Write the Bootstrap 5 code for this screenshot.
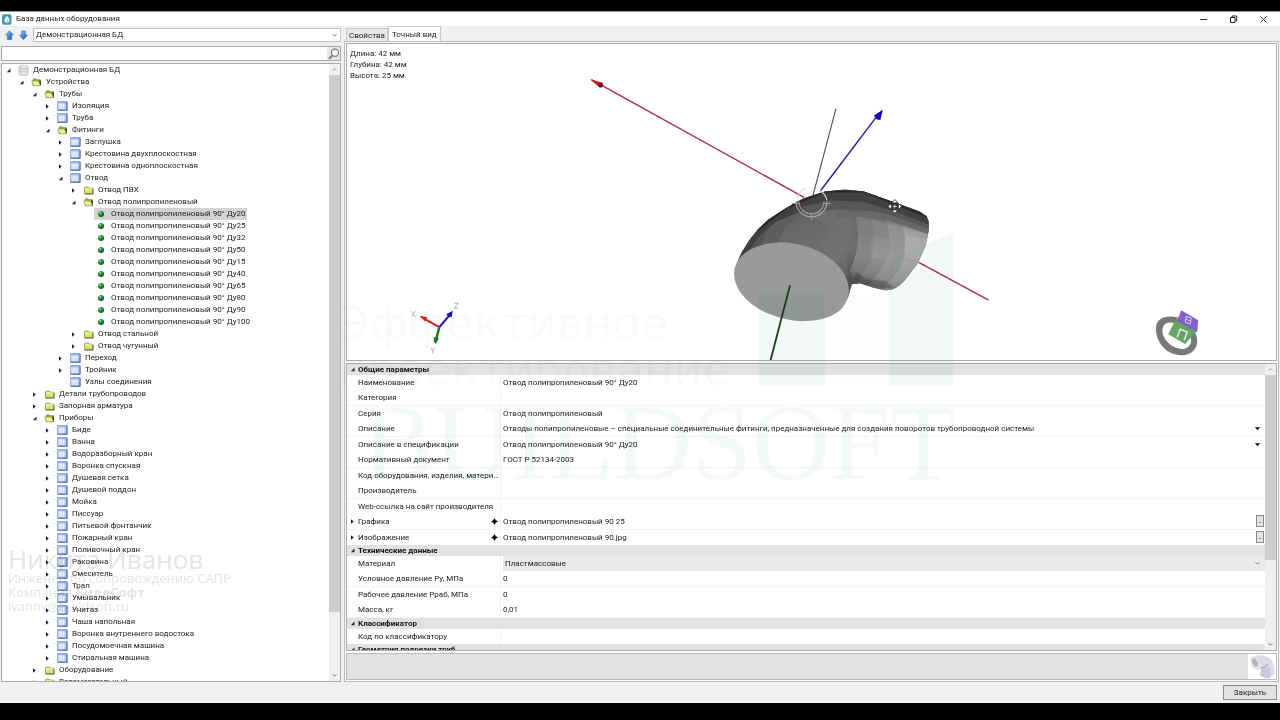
<!DOCTYPE html>
<html lang="ru">
<head>
<meta charset="utf-8">
<meta name="viewport" content="width=device-width, initial-scale=1">
<title>База данных оборудования</title>
<link rel="stylesheet" href="https://cdn.jsdelivr.net/npm/bootstrap@5.3.0/dist/css/bootstrap.min.css">
<style>
  body { background: #000; font: 8px/12px Roboto, "Open Sans", sans-serif; color: #222; padding: 11px 0 17px; }
  button, select, input { font: inherit; color: inherit; }
  .plain { border: 0; padding: 0; background: none; line-height: 0; }
  .app-window { background: #f0f0f0; }
  .title-bar { height: 15px; background: #fff; border-top: 1px solid #999; padding: 0 2px; }
  .title-bar button { width: 30px; }
  .side { width: 341px; padding: 2px 0 0 1px; }
  .top-row { gap: 5px; padding-left: 4px; }
  .combo { height: 14px; border: 1px solid #c4c4c4; border-radius: 0; background: #fff; padding: 0 2px; appearance: none; }
  .combo-wrap svg, .value-select svg { position: absolute; right: 3px; top: 5px; pointer-events: none; }
  .search-row { height: 15px; border: 1px solid #aaa; background: #fff; margin: 4px 0 2px; }
  .search-row input { border: 0; outline: 0; min-width: 0; height: 12px; }
  .search-row button { width: 13px; background: #e6e6e6; }
  .panel { background: #fff; border: 1px solid #aaa; }
  .tree ul { list-style: none; margin: 0; padding: 0 0 0 13px; }
  .tree > ul { padding-left: 1px; }
  .node { height: 12px; white-space: nowrap; }
  .node .toggle { width: 13px; height: 12px; padding-right: 2px; }
  .node .item { height: 12px; padding-right: 2px; }
  .node .pic { width: 17px; padding-left: 2px; line-height: 0; }
  .selected { background: #d3d3d3; }
  .scroll-track { width: 11px; background: #f0f0f0; }
  .scroll-track button { height: 11px; }
  .thumb { background: #cdcdcd; }
  .main-col { padding: 0 1px 0 3px; }
  .tabs { height: 15px; padding-left: 2px; }
  .tabs button { border: 1px solid #c8c8c8; border-bottom: 0; border-radius: 0; padding: 0 2px; background: #e9e9e9; height: 13px; line-height: 13px; color: #222; }
  .tabs button.active { background: #fff; height: 15px; padding: 0 3px; }
  .frame { border: 1px solid #bbb; padding: 1px; background: #fafafa; gap: 2px; }
  .view3d { flex: 319 1 0; }
  .view3d svg { width: 100%; height: 100%; }
  .dims { left: 3px; top: 4px; line-height: 11px; }
  .props { flex: 289 1 0; }
  .props table { width: 100%; table-layout: fixed; border-collapse: separate; border-spacing: 0; }
  .props th, .props td { padding: 0; font-weight: 400; height: 15px; line-height: 15px; white-space: nowrap; overflow: hidden; text-overflow: ellipsis; }
  .props .prop:nth-child(odd) > * { border-bottom: 1px solid #f4f4f4; height: 16px; }
  .props .group th { font-weight: 700; background: #e2e2e2; height: 11px; line-height: 11px; color: #111; }
  .props td { border-left: 1px solid #f2f2f2; padding-left: 2px; }
  .props .c-mark { width: 11px; text-align: center; line-height: 0; }
  .props .c-name { width: 130px; }
  .props .c-flag { width: 12px; }
  .drop { width: 15px; }
  .more { width: 8px; height: 12px; border: 1px solid #888; background: #e4e4e4; padding: 0; font-size: 7px; line-height: 10px; margin-right: 1px; }
  .value-select select { width: 100%; height: 15px; line-height: 15px; border: 0; background: #e9e9e9; padding: 0 2px; appearance: none; display: block; }
  .value-select svg { top: 5px; right: 4px; }
  .preview { height: 27px; border: 1px solid #bbb; background: #e2e2e2; }
  .preview svg { background: #fff; }
  .foot { height: 21px; padding: 0 3px 0 0; }
  .close-btn { width: 54px; height: 15px; border: 1px solid #8c8c8c; border-radius: 0; background: #e1e1e1; padding: 0; line-height: 13px; }
  .ghost { position: absolute; pointer-events: none; mix-blend-mode: multiply; white-space: nowrap; }
  .ghost-author { left: 8px; bottom: 90px; color: #e1e5e9; font: 13px/14px "Open Sans", sans-serif; }
  .ghost-author .who { font-size: 26px; line-height: 24px; }
  .ghost-slogan { left: 338px; top: 290px; font: 45px/46px "DejaVu Sans", sans-serif; color: #f8fafb; }
  .ghost-brand { left: 362px; top: 370px; font: 108px/124px "Liberation Serif", serif; color: #f5f9fa; }
  .ghost-logo { left: 758px; top: 222px; }
</style>
</head>
<body class="vh-100 d-flex flex-column overflow-hidden">
<svg class="position-absolute" width="0" height="0" aria-hidden="true">
  <defs>
    <linearGradient id="gGrid" x1="0" y1="0" x2="1" y2="1"><stop offset="0" stop-color="#e4f0ff"/><stop offset="1" stop-color="#93ade6"/></linearGradient>
    <linearGradient id="gArrow" x1="0" y1="0" x2="1" y2="1"><stop offset="0" stop-color="#7fd0fa"/><stop offset="1" stop-color="#164a9c"/></linearGradient>
    <radialGradient id="gBall" cx=".35" cy=".3" r=".7"><stop offset="0" stop-color="#a8eaa8"/><stop offset=".4" stop-color="#239a35"/><stop offset="1" stop-color="#075514"/></radialGradient>
  </defs>
  <symbol id="i-open" viewBox="0 0 5 5"><path d="M4.500.5v3.700H.8z" fill="#252550"/></symbol>
  <symbol id="i-shut" viewBox="0 0 5 5"><path d="M1 .3l2.700 2.200L1 4.700z" fill="#14143c"/></symbol>
  <symbol id="i-db" viewBox="0 0 11 11"><path d="M1 2v7c0 1 2 1.600 4.500 1.600S10 10 10 9V2z" fill="#dfe2e6" stroke="#a9aeb5" stroke-width=".7"/><ellipse cx="5.500" cy="2" rx="4.500" ry="1.500" fill="#f3f4f6" stroke="#a9aeb5" stroke-width=".7"/><path d="M1 5.500c2 1.300 7 1.300 9 0M3 4v6" fill="none" stroke="#c0c5cb" stroke-width=".6"/></symbol>
  <symbol id="i-folder" viewBox="0 0 11 11"><path d="M1.500 8.500V3l.8-1h2.900l.8 1.200h3.700v5.300z" fill="#dcdf72" stroke="#8b913c" stroke-width=".8"/><path d="M2 4h7" stroke="#f8fac0"/><path d="M1.500 9.100h8.600V4" fill="none" stroke="#4b5022" stroke-width=".8"/></symbol>
  <symbol id="i-folder-open" viewBox="0 0 11 11"><path d="M2 8.500V2.700l.7-.9h2.500l.8 1h3.500v5.700z" fill="#a8a950" stroke="#72742e" stroke-width=".7"/><path d="M.6 4h6.800l2 4.800H2.600z" fill="#edf0a6" stroke="#8b913c" stroke-width=".6"/><path d="M8 4l1.800 4.800V3.500z" fill="#33351c"/></symbol>
  <symbol id="i-grid" viewBox="0 0 11 11"><rect x=".6" y=".6" width="9.400" height="8.600" fill="url(#gGrid)" stroke="#7f98cc" stroke-width=".8"/><path d="M1 1.700h9" stroke="#8faae6"/><path d="M2 4.700h6.500M2 7h6.500M4 2.500V8M6.500 2.500V8" stroke="#fff" stroke-width=".7"/><path d="M.6 9.300H10.100V1" fill="none" stroke="#3f5590" stroke-width=".8"/></symbol>
  <symbol id="i-ball" viewBox="0 0 11 11"><circle cx="5" cy="5" r="3" fill="url(#gBall)"/></symbol>
  <symbol id="i-down" viewBox="0 0 7 5"><path d="M1.500 1.200l2 2 2-2" fill="none" stroke="#777" stroke-width="1"/></symbol>
  <symbol id="i-up" viewBox="0 0 7 5"><path d="M1.500 3.500l2-2 2 2" fill="none" stroke="#999" stroke-width="1"/></symbol>
  <symbol id="i-pick" viewBox="0 0 7 5"><path d="M.8 1l1.500.3h2.400L6.200 1 3.500 4.200z" fill="#111"/></symbol>
  <symbol id="i-diamond" viewBox="0 0 8 8"><path d="M4 .5L5.300 2.700 7.500 4 5.300 5.300 4 7.500 2.700 5.300.5 4l2.200-1.300z" fill="#111" stroke="#111" stroke-width=".5"/></symbol>
</svg>

<div class="app-window flex-fill d-flex flex-column position-relative" style="min-height:0">
  <header class="title-bar d-flex align-items-center flex-shrink-0">
    <svg width="10" height="11" viewBox="0 0 10 11" aria-hidden="true"><rect width="9.500" height="10.500" y=".3" rx="2" fill="#3c9aaa"/><path d="M5 1.800c1.600 2 2.700 3.300 2.700 4.900a2.800 2.800 0 0 1-5.400 0C2.300 5 3.600 4 5 1.800z" fill="#fff"/><path d="M5 5c1 1 1.200 1.600 1 2.800L4 8z" fill="#8dcbd3"/></svg>
    <span class="ms-1">База данных оборудования</span>
    <div class="ms-auto d-flex">
      <button class="plain" aria-label="Свернуть"><svg width="9" height="9"><path d="M1 4.500h7" stroke="#333"/></svg></button>
      <button class="plain" aria-label="Восстановить"><svg width="9" height="9" fill="none" stroke="#222"><path d="M1.500 2.500h4.500v5H1.500zM3 2V1h4.700v5H6.500"/></svg></button>
      <button class="plain" aria-label="Закрыть окно"><svg width="9" height="9"><path d="M1.500 1.500l6 6m0-6l-6 6" stroke="#333"/></svg></button>
    </div>
  </header>

  <div class="d-flex flex-fill" style="min-height:0">
    <aside class="side d-flex flex-column flex-shrink-0">
      <div class="top-row d-flex align-items-center flex-shrink-0">
        <button class="plain" aria-label="Вверх"><svg width="9" height="11"><path d="M4.500.8l4 4.200H6.700v4.500H2.300V5H.5z" fill="url(#gArrow)" stroke="#2e6cb4" stroke-width=".5"/></svg></button>
        <button class="plain" aria-label="Вниз"><svg width="9" height="11"><path d="M2.500 1h4v4h2l-4 4.800L.5 5.500l2-.5z" fill="url(#gArrow)" stroke="#2e6cb4" stroke-width=".5"/></svg></button>
        <div class="combo-wrap position-relative flex-fill">
          <select class="combo w-100 d-block" aria-label="База данных"><option>Демонстрационная БД</option></select>
          <svg width="7" height="5"><use href="#i-down"/></svg>
        </div>
      </div>
      <div class="search-row d-flex flex-shrink-0">
        <input type="text" class="flex-fill" aria-label="Поиск">
        <button class="plain" aria-label="Найти"><svg width="12" height="12" fill="none" stroke="#777"><circle cx="7" cy="4.700" r="3.600" fill="#f4f4f4" stroke-width="1.100"/><path d="M4.400 7.300L1 10.800" stroke-width="1.700"/></svg></button>
      </div>
      <div class="panel d-flex flex-fill overflow-hidden">
        <nav class="tree flex-fill overflow-hidden" id="tree" aria-label="Оборудование"></nav>
        <div class="scroll-track d-flex flex-column">
          <button class="plain" aria-label="Прокрутить вверх"><svg width="7" height="5"><use href="#i-up"/></svg></button>
          <div class="thumb" style="flex:537 1 0"></div><div style="flex:58 1 0"></div>
          <button class="plain" aria-label="Прокрутить вниз"><svg width="7" height="5"><use href="#i-down"/></svg></button>
        </div>
      </div>
    </aside>

    <main class="main-col flex-fill d-flex flex-column" style="min-width:0">
      <div class="tabs d-flex align-items-end flex-shrink-0" role="tablist">
        <button role="tab" aria-selected="false">Свойства</button>
        <button role="tab" aria-selected="true" class="active">Точный вид</button>
      </div>
      <div class="frame d-flex flex-column flex-fill overflow-hidden">
        <section class="view3d panel position-relative overflow-hidden" aria-label="Точный вид">
          <svg class="d-block" viewBox="346 43 931 317" preserveAspectRatio="xMidYMid slice" role="img" aria-label="Отвод">
            <defs>
              <linearGradient id="gBody" gradientUnits="userSpaceOnUse" x1="800" y1="190" x2="835" y2="285"><stop offset="0" stop-color="#4a4a4a"/><stop offset=".3" stop-color="#676767"/><stop offset=".7" stop-color="#707070"/><stop offset="1" stop-color="#505050"/></linearGradient>
              <linearGradient id="gFan" gradientUnits="userSpaceOnUse" x1="890" y1="205" x2="868" y2="292"><stop offset="0" stop-color="#565656"/><stop offset=".2" stop-color="#6c6c6c"/><stop offset=".21" stop-color="#7a7a7a"/><stop offset=".6" stop-color="#888"/><stop offset=".8" stop-color="#777"/><stop offset=".9" stop-color="#555"/><stop offset="1" stop-color="#777"/></linearGradient>
              <clipPath id="bodyClip"><path id="bodyShape" d="M737 262L741 253 749 240 757 230 768 219 787 207 803 198 825 191 845 189 864 191 895 202 920 211 927 216Q930 221 929 230L926 245 918 263 905 280Q895 291 885 290L872 287 860 283 852 284 848 298 810 300z"/></clipPath>
            </defs>
            <path d="M591 79L804 197M919 262L989 300" stroke="#a8304a" stroke-width="1.400"/>
            <path d="M589.500 78.500l13 3.500-3 5z" fill="#cf1820"/><circle cx="600.500" cy="84.500" r="2.200" fill="#5c0910"/>
            <path d="M836 108L813 195" stroke="#405148" stroke-width="1.100"/>
            <path d="M820 191L876 117" stroke="#26268c" stroke-width="1.500"/><path d="M883 109l-2.500 10.500-3.500-.5-3-4z" fill="#1008b8"/>
            <use href="#bodyShape" fill="url(#gBody)"/>
            <g clip-path="url(#bodyClip)">
              <path d="M740 262l17-32 11-8 15-1-11 14-8 20z" fill="#555"/>
              <path d="M768 222l19-12 11 3-13 15-8 15-16 2 6-14z" fill="#5e5e5e"/>
              <path d="M852 207Q866 235 850 270L856 292 880 300 945 280 940 210 890 195z" fill="url(#gFan)"/>
              <path d="M866 207Q881 232 870 262L854 288 880 300 945 280 940 210z" fill="#fff" opacity=".07"/>
              <path d="M882 210Q897 240 884 266L866 288 880 300 945 280 940 210z" fill="#fff" opacity=".1"/>
              <path d="M899 216Q911 240 899 270L880 292 920 300 945 280 940 215z" fill="#fff" opacity=".12"/>
              <path d="M906 234l24 6-7 20-18-3z" fill="#fff" opacity=".12"/>
              <path d="M871 236l20 3-4 20-17-2z" fill="#fff" opacity=".06"/>
              <path d="M850 288l7-16 9 7 20 2 8 6-14 2-20-6z" fill="#333" opacity=".3"/>
              <path d="M806 210l38-4 10 17-7 24 1 30-22-20-4-14 7-17z" fill="#777" opacity=".4"/>
              <path d="M734 262l23-34 30-24 38-16 39 0 66 24v14l-34-12-34-8-34-1-28 6-25 11-18 16-10 16z" fill="#404040"/>
              <path d="M803 206l26-6 33 1 31 9 36 14v7l-32-11-31-8-30-3-32 4z" fill="#575757"/>
              <path d="M834 210l32 0 24 4 39 15v5l-38-13-27-5-28 2z" fill="#686868"/>
              <path d="M757 230l30-23 38-16 39 0 63 25" fill="none" stroke="#282828" stroke-width="2"/>
            </g>
            <path d="M734 272C735 253 757 242 783 242c35 2 65 22 66 48-1 22-21 31-48 31-35-2-68-23-67-49z" fill="#999b9a"/>
            <path d="M790 285L770.500 360" stroke="#16421c" stroke-width="1.800"/>
            <g fill="none" stroke="#aaa" stroke-width="1.100"><path d="M796 201a15.500 15.500 0 0 0 31 0"/><path d="M799 201a12.500 12.500 0 0 0 25 0M811.500 213v7M792 203h8M823 203h8" stroke="#999"/><path d="M797 198q2-7 8-10M820 190q6 4 7 10" stroke="#ddd"/></g>
            <g stroke="#222" stroke-width=".8" fill="#fff"><path d="M895 199l3 3.500h-6zM895 213l3-3.500h-6zM888 206l3.500-3v6zM902 206l-3.500-3v6z"/><path d="M893 206h4M895 204v4" stroke="#ddd"/></g>
            <path d="M438.500 327L424 319" stroke="#d91c1c" stroke-width="2"/><path d="M418.500 315.500l8 1.500-2.500 4z" fill="#d91c1c"/>
            <path d="M438.500 327L448 316" stroke="#1414b4" stroke-width="2"/><path d="M452 310.500l-1 6-3 .5-2.500-3z" fill="#1414b4"/>
            <path d="M438.500 327L435.500 339" stroke="#147828" stroke-width="2.400"/><path d="M433 337l5 1-3 6-2-3z" fill="#147828"/>
            <g fill="none" stroke="#999" stroke-width=".8"><path d="M410.500 311l4 6m0-6l-4 6M453.500 303h4.500l-4.500 5h4M430 347.500l2 3m2-3l-2 3v3"/></g>
            <path fill-rule="evenodd" fill="#787878" d="M1157 325c2-8 12-11 24-7 12 5 18 16 17 25-2 11-14 15-26 10-11-5-17-18-15-28zm7 1c-3 7 2 16 11 21 9 4 16 1 17-6 0-8-6-14-14-17-7-3-12-2-14 2z"/>
            <path d="M1172 330l5-11 3-4-5 11z" fill="#d67776"/>
            <path d="M1182 310l17 10-1 12-20-11z" fill="#805fce"/>
            <path d="M1176 320l21 11-11 13-17-10z" fill="#62a564"/>
            <path d="M1178 337l3-8 7 3-3 8" fill="none" stroke="#e8f4e8" stroke-width="1.500"/>
            <path d="M1187 316l5 2-1 6-5-2zM1187 319l4 2" fill="none" stroke="#ddd5f4" stroke-width="1"/>
          </svg>
          <div class="dims position-absolute">Длина: 42 мм<br>Глубина: 42 мм<br>Высота: 25 мм</div>
        </section>

        <section class="props panel d-flex overflow-hidden" aria-label="Параметры">
          <div class="flex-fill overflow-hidden"><table id="props"><colgroup><col class="c-mark"><col class="c-name"><col class="c-flag"><col><col class="drop"></colgroup></table></div>
          <div class="scroll-track d-flex flex-column flex-shrink-0">
            <button class="plain" aria-label="Параметры вверх"><svg width="7" height="5"><use href="#i-up"/></svg></button>
            <div class="thumb" style="flex:185 1 0"></div><div style="flex:79 1 0"></div>
            <button class="plain" aria-label="Параметры вниз"><svg width="7" height="5"><use href="#i-down"/></svg></button>
          </div>
        </section>

        <div class="preview d-flex justify-content-end flex-shrink-0">
          <svg width="28" height="25" viewBox="0 0 28 25" role="img" aria-label="Изображение отвода"><path d="M4 3C10 0 20 1 24 7c2 4 3 9 2 13-3 5-11 4-14 1l1-6c-5 2-9-1-10-5-1-3-1-6 1-7z" fill="#dcdbe9"/><path d="M12 21l2-7 5-4 4 5-1 9c-4 1-8-1-10-3z" fill="#cac9dc"/><ellipse cx="7" cy="8.500" rx="3.500" ry="5.500" transform="rotate(-25 7 8.500)" fill="#b7b4c2" stroke="#ebebf4" stroke-width="1.500"/><path d="M13 14q4-1 7-4" stroke="#a9a7bd" fill="none"/></svg>
        </div>
      </div>
    </main>
  </div>

  <footer class="foot d-flex align-items-center justify-content-end flex-shrink-0"><button class="close-btn">Закрыть</button></footer>

  <div class="ghost ghost-logo"><svg width="198" height="153"><path d="M0 60h67v93H0zM131 26L196 0v153h-65z" fill="#f4f8f9"/><path d="M67 60h64v93H67z" fill="#fcfdfd"/></svg></div>
  <div class="ghost ghost-slogan">Эффективное<br>проектирование</div>
  <div class="ghost ghost-brand">BUILDSOFT</div>
  <div class="ghost ghost-author"><div class="who">Никита Иванов</div>Инженер по сопровождению САПР<br>Компания <b>БилдСофт</b><br>ivannv@buildsoft.ru</div>
</div>

<script>
  // Node: [label, icon, children | true (collapsed) | nothing (leaf)]
  const grid = n => [n, 'grid', true], shut = n => [n, 'folder', true];
  const sizes = [20, 25, 32, 50, 15, 40, 65, 80, 90, 100];
  const nodes = [['Демонстрационная БД', 'db', [['Устройства', 'folder-open', [
    ['Трубы', 'folder-open', [
      grid('Изоляция'), grid('Труба'),
      ['Фитинги', 'folder-open', [
        ...['Заглушка', 'Крестовина двухплоскостная', 'Крестовина одноплоскостная'].map(grid),
        ['Отвод', 'grid', [
          shut('Отвод ПВХ'),
          ['Отвод полипропиленовый', 'folder-open', sizes.map(s => ['Отвод полипропиленовый 90° Ду' + s, 'ball'])],
          shut('Отвод стальной'), shut('Отвод чугунный')]],
        grid('Переход'), grid('Тройник'), ['Узлы соединения', 'grid']]]]],
    shut('Детали трубопроводов'), shut('Запорная арматура'),
    ['Приборы', 'folder-open', ['Биде', 'Ванна', 'Водоразборный кран', 'Воронка спускная', 'Душевая сетка', 'Душевой поддон', 'Мойка', 'Писсуар', 'Питьевой фонтанчик', 'Пожарный кран', 'Поливочный кран', 'Раковина', 'Смеситель', 'Трап', 'Умывальник', 'Унитаз', 'Чаша напольная', 'Воронка внутреннего водостока', 'Посудомоечная машина', 'Стиральная машина'].map(grid)],
    shut('Оборудование'), shut('Вспомогательный')]]]]];
  const icon = (id, s) => `<svg width="${s}" height="${s}" aria-hidden="true"><use href="#i-${id}"/></svg>`;
  const branch = list => '<ul>' + list.map(([name, pic, kids]) => `<li><div class="node d-flex">` +
    (kids ? `<button class="plain toggle" aria-label="${name}">${icon(kids === true ? 'shut' : 'open', 5)}</button>` : '<span class="toggle"></span>') +
    `<span class="item d-flex align-items-center ${name.endsWith('Ду20') ? 'selected' : ''}"><span class="pic">${icon(pic, 11)}</span>${name}</span></div>` +
    (Array.isArray(kids) ? branch(kids) : '') + '</li>').join('') + '</ul>';
  document.getElementById('tree').innerHTML = branch(nodes);

  // Property: [name, value, control]
  const groups = [
    ['Общие параметры', [['Наименование', 'Отвод полипропиленовый 90° Ду20'], ['Категория', ''], ['Серия', 'Отвод полипропиленовый'],
      ['Описание', 'Отводы полипропиленовые – специальные соединительные фитинги, предназначенные для создания поворотов трубопроводной системы', 'drop'],
      ['Описание в спецификации', 'Отвод полипропиленовый 90° Ду20', 'drop'], ['Нормативный документ', 'ГОСТ Р 52134-2003'],
      ['Код оборудования, изделия, материала', ''], ['Производитель', ''], ['Web-ссылка на сайт производителя', ''],
      ['Графика', 'Отвод полипропиленовый 90 25', 'more'], ['Изображение', 'Отвод полипропиленовый 90.jpg', 'more']]],
    ['Технические данные', [['Материал', 'Пластмассовые', 'select'], ['Условное давление Ру, МПа', '0'], ['Рабочее давление Рраб, МПа', '0'], ['Масса, кг', '0,01']]],
    ['Классификатор', [['Код по классификатору', '']]],
    ['Геометрия подрезки труб', []]];
  const controls = {
    drop: n => `<button class="plain d-block w-100" aria-label="${n}"><svg width="7" height="5"><use href="#i-pick"/></svg></button>`,
    more: n => `<button class="more d-block ms-auto" aria-label="${n}">..</button>`
  };
  const row = ([name, value, kind]) => {
    const more = kind === 'more';
    const cells = kind === 'select'
      ? `<td colspan="2" class="py-0"><div class="value-select position-relative"><select aria-label="${name}"><option>${value}</option></select><svg width="7" height="5"><use href="#i-down"/></svg></div></td>`
      : kind ? `<td>${value}</td><th>${controls[kind](name)}</th>` : `<td colspan="2">${value}</td>`;
    return `<tr class="prop"><th class="c-mark">${more ? icon('shut', 5) : ''}</th>` +
      (more ? `<th scope="row">${name}</th><th class="c-mark">${icon('diamond', 7)}</th>` : `<th scope="row" colspan="2">${name}</th>`) + cells + '</tr>';
  };
  document.getElementById('props').insertAdjacentHTML('beforeend', groups.map(([name, rows]) =>
    `<tbody><tr class="group"><th class="c-mark">${icon('open', 5)}</th><th colspan="4" scope="rowgroup">${name}</th></tr>${rows.map(row).join('')}</tbody>`).join(''));
</script>
<script src="https://cdn.jsdelivr.net/npm/bootstrap@5.3.0/dist/js/bootstrap.bundle.min.js"></script>
</body>
</html>
